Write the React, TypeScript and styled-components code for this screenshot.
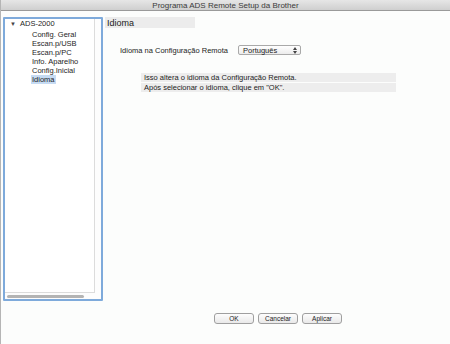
import React from "react";
import styled, { createGlobalStyle } from "styled-components";

const GlobalStyle = createGlobalStyle`
  html, body {
    margin: 0;
    padding: 0;
    background: #fcfdfc;
  }
  body {
    font-family: "Liberation Sans", Arial, sans-serif;
    color: #222;
  }
`;

const Window = styled.div`
  width: 450px;
  height: 344px;
  display: flex;
  flex-direction: column;
  background: #fcfdfc;
  border-left: 1px solid #b5b5b5;
  box-sizing: border-box;
  overflow: hidden;
`;

const TitleBar = styled.div`
  height: 10px;
  flex-shrink: 0;
  display: flex;
  align-items: center;
  justify-content: center;
  background: linear-gradient(#e6e6e6, #cfcfcf);
  border-bottom: 1px solid #9a9a9a;
  font-size: 8px;
  color: #3a3a3a;
`;

const Body = styled.div`
  flex: 1;
  display: flex;
  padding: 6px 0 0 2px;
`;

const Sidebar = styled.div`
  width: 100px;
  height: 284px;
  box-sizing: border-box;
  border: 2px solid #7eaadb;
  border-radius: 1px;
  display: flex;
  flex-direction: column;
  background: #fdfdfd;
`;

const TreeArea = styled.div`
  flex: 1;
  display: flex;
`;

const TreeList = styled.div`
  flex: 1;
  background: #ffffff;
  border-right: 1px solid #dcdcdc;
  border-bottom: 1px solid #dcdcdc;
`;

const ScrollCol = styled.div`
  width: 6px;
`;

const HScroll = styled.div`
  height: 6px;
  display: flex;
  align-items: center;
  padding-left: 2px;
`;

const Thumb = styled.div`
  width: 77px;
  height: 3px;
  border-radius: 2px;
  background: #b4b4b4;
`;

const TreeRow = styled.div<{ $depth: number }>`
  height: 9px;
  display: flex;
  align-items: center;
  padding-left: ${(p) => (p.$depth ? 26 : 5)}px;
  margin-bottom: ${(p) => (p.$depth ? 0 : 2)}px;
  font-size: 7.5px;
  color: #1e1e1e;
  white-space: nowrap;
`;

const Toggle = styled.span`
  width: 9px;
  font-size: 6px;
  color: #444;
`;

const Label = styled.span<{ $selected?: boolean }>`
  padding: 0 1px;
  background: ${(p) => (p.$selected ? "#c6dbf3" : "transparent")};
`;

const Main = styled.div`
  flex: 1;
  display: flex;
  flex-direction: column;
  padding-left: 2px;
`;

const Header = styled.div`
  width: 88px;
  height: 11px;
  display: flex;
  align-items: center;
  padding-left: 2px;
  background: #ececec;
  font-size: 9px;
  color: #222;
`;

const SettingRow = styled.div`
  display: flex;
  align-items: center;
  margin: 17px 0 0 15px;
  font-size: 7.5px;
`;

const SettingLabel = styled.span`
  width: 118px;
`;

const Select = styled.div`
  width: 63px;
  height: 10px;
  box-sizing: border-box;
  display: flex;
  align-items: center;
  justify-content: space-between;
  padding: 0 3px 0 4px;
  border: 1px solid #a9a9a9;
  border-radius: 2px;
  background: linear-gradient(#ffffff, #ececec);
  font-size: 7.5px;
`;

const Notes = styled.div`
  margin: 18px 0 0 36px;
  width: 255px;
  display: flex;
  flex-direction: column;
  gap: 1px;
`;

const Note = styled.div`
  height: 9px;
  display: flex;
  align-items: center;
  padding-left: 3px;
  background: #ededed;
  font-size: 7.5px;
  color: #222;
`;

const Buttons = styled.div`
  margin-top: auto;
  margin-bottom: 20px;
  display: flex;
  gap: 4px;
  padding-left: 109px;
`;

const Button = styled.div`
  width: 40px;
  height: 11px;
  box-sizing: border-box;
  display: flex;
  align-items: center;
  justify-content: center;
  border: 1px solid #9f9f9f;
  border-radius: 3px;
  background: linear-gradient(#fdfdfd, #e9e9e9);
  font-size: 6.5px;
  color: #222;
`;

const items = [
  "Config. Geral",
  "Escan.p/USB",
  "Escan.p/PC",
  "Info. Aparelho",
  "Config.Inicial",
  "Idioma",
];

export default function App() {
  return (
    <>
      <GlobalStyle />
      <Window>
        <TitleBar>Programa ADS Remote Setup da Brother</TitleBar>
        <Body>
          <Sidebar>
            <TreeArea>
              <TreeList>
                <TreeRow $depth={0}>
                  <Toggle>▼</Toggle>
                  <Label>ADS-2000</Label>
                </TreeRow>
                {items.map((name) => (
                  <TreeRow key={name} $depth={1}>
                    <Label $selected={name === "Idioma"}>{name}</Label>
                  </TreeRow>
                ))}
              </TreeList>
              <ScrollCol />
            </TreeArea>
            <HScroll>
              <Thumb />
            </HScroll>
          </Sidebar>
          <Main>
            <Header>Idioma</Header>
            <SettingRow>
              <SettingLabel>Idioma na Configuração Remota</SettingLabel>
              <Select>
                Português
                <svg width="4" height="7" viewBox="0 0 4 7">
                  <path d="M0 3 L2 0 L4 3 Z M0 4 L2 7 L4 4 Z" fill="#444" />
                </svg>
              </Select>
            </SettingRow>
            <Notes>
              <Note>Isso altera o idioma da Configuração Remota.</Note>
              <Note>Após selecionar o idioma, clique em "OK".</Note>
            </Notes>
            <Buttons>
              <Button>OK</Button>
              <Button>Cancelar</Button>
              <Button>Aplicar</Button>
            </Buttons>
          </Main>
        </Body>
      </Window>
    </>
  );
}
